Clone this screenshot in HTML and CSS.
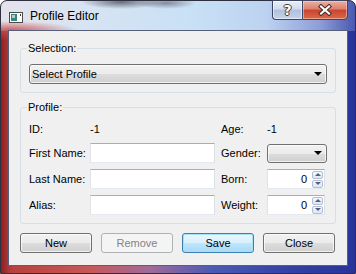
FILE: index.html
```html
<!DOCTYPE html>
<html lang="en">

<head>
    <meta charset="UTF-8" />
    <meta name="viewport" content="width=device-width, initial-scale=1.0" />
    <title>Profile Editor</title>
    <link rel="stylesheet" href="styles.css">
</head>

<body>
    <div class="window">
        <div class="titlebar">
            <svg class="app-icon" width="14" height="11" viewBox="0 0 14 11">
                <rect x="0.5" y="0.5" width="13" height="10" fill="#fff" stroke="#4a4a4a" />
                <rect x="2" y="2" width="6" height="7" fill="#3a8478" />
                <rect x="3" y="3" width="3" height="3" fill="#a6d4cc" />
                <rect x="11" y="2" width="1" height="2" fill="#333" />
            </svg>
            <span class="caption">Profile Editor</span>
            <div class="caption-buttons">
                <span class="cap-btn help">?</span>
                <span class="cap-btn close">
                    <svg width="16" height="12" viewBox="0 0 16 12">
                        <path d="M4 2.5 L12 9.5 M12 2.5 L4 9.5" stroke="#4a2a28" stroke-width="4.2" stroke-linecap="square" />
                        <path d="M4 2.5 L12 9.5 M12 2.5 L4 9.5" stroke="#fff" stroke-width="2.2" stroke-linecap="square" />
                    </svg>
                </span>
            </div>
        </div>

        <div class="client">
            <fieldset class="group selection">
                <legend>Selection:</legend>
                <div class="combo">
                    <span>Select Profile</span>
                    <i class="arrow"></i>
                </div>
            </fieldset>

            <fieldset class="group profile">
                <legend>Profile:</legend>
                <div class="form-grid">
                    <label>ID:</label>
                    <span class="value">-1</span>
                    <label class="second">Age:</label>
                    <span class="value">-1</span>

                    <label>First Name:</label>
                    <input type="text" class="text-input" />
                    <label class="second">Gender:</label>
                    <div class="combo small"><span></span><i class="arrow"></i></div>

                    <label>Last Name:</label>
                    <input type="text" class="text-input" />
                    <label class="second">Born:</label>
                    <div class="spin">
                        <span class="num">0</span>
                        <div class="spin-btns">
                            <i class="up"></i>
                            <i class="down"></i>
                        </div>
                    </div>

                    <label>Alias:</label>
                    <input type="text" class="text-input" />
                    <label class="second">Weight:</label>
                    <div class="spin">
                        <span class="num">0</span>
                        <div class="spin-btns">
                            <i class="up"></i>
                            <i class="down"></i>
                        </div>
                    </div>
                </div>
            </fieldset>

            <div class="buttons">
                <button class="btn">New</button>
                <button class="btn" disabled>Remove</button>
                <button class="btn default">Save</button>
                <button class="btn">Close</button>
            </div>
        </div>
    </div>
</body>

</html>
```

FILE: styles.css
```css
* {
    margin: 0;
    padding: 0;
    box-sizing: border-box;
}

body {
    width: 356px;
    height: 274px;
    overflow: hidden;
    font-family: "Liberation Sans", Arial, sans-serif;
    font-size: 11px;
    color: #000;
    background: #fff;
}

.window {
    width: 356px;
    height: 274px;
    border: 1px solid #2e3040;
    border-radius: 7px 7px 0 0;
    padding: 0 7px 7px;
    display: flex;
    flex-direction: column;
    background:
        radial-gradient(ellipse 40px 7px at 120px 1px, rgba(70, 70, 84, 0.75), rgba(70, 70, 84, 0) 100%) no-repeat,
        radial-gradient(ellipse 30px 6px at 165px 2px, rgba(80, 80, 96, 0.6), rgba(80, 80, 96, 0) 100%) no-repeat,
        radial-gradient(ellipse 70px 10px at 8px 30px, rgba(196, 70, 70, 0.9), rgba(196, 70, 70, 0) 100%) no-repeat,
        linear-gradient(to right, #e4e2ea 0%, #d8e4f2 22%, #c8e0f6 55%, #bcd2f0 75%, #8e9ed8 90%, #4a58b0 100%) 0 0 / 100% 30px no-repeat,
        linear-gradient(to right, #8e2020 0%, #b84040 3%, #c85858 25%, #a06a9a 42%, #4a5ab4 60%, #303ea2 85%, #28349a 100%);
}

.titlebar {
    height: 29px;
    display: flex;
    align-items: flex-start;
}

.app-icon {
    margin: 11px 0 0 1px;
}

.caption {
    margin: 7px 0 0 7px;
    font-size: 12px;
    line-height: 16px;
    color: #000;
}

.caption-buttons {
    margin: -1px 0 0 auto;
    display: flex;
}

.cap-btn {
    height: 20px;
    display: flex;
    align-items: center;
    justify-content: center;
    border: 1px solid #3c4660;
}

.help {
    width: 30px;
    border-right: 0;
    border-radius: 0 0 0 4px;
    background: linear-gradient(#e8eef8 0%, #cfdcee 45%, #b0c0de 50%, #c4d2ea 100%);
    box-shadow: inset 0 0 0 1px rgba(255, 255, 255, 0.55);
    color: #fff;
    font-family: "DejaVu Sans", sans-serif;
    font-weight: 700;
    font-size: 14px;
    line-height: 14px;
    text-shadow: 1px 0 0 #3a3a48, -1px 0 0 #3a3a48, 0 1px 0 #3a3a48, 0 -1px 0 #3a3a48;
}

.close {
    width: 46px;
    border-radius: 0 0 4px 0;
    background: linear-gradient(#eab0a4 0%, #dc806e 45%, #c8452e 50%, #d86a4a 100%);
    box-shadow: inset 0 0 0 1px rgba(255, 220, 210, 0.5);
}

.client {
    flex: 1;
    background: #f0f0f0;
    border: 1px solid #56607a;
    padding: 11px 11px 0;
}

.group {
    border: 1px solid #d5dfe5;
    border-radius: 3px;
    padding: 9px 8px 8px;
}

.group legend {
    margin-left: -2px;
    padding: 0 1px;
    line-height: 13px;
}

.profile {
    margin-top: 8px;
    padding-top: 7px;
}

.combo {
    height: 20px;
    border: 1px solid #707070;
    border-radius: 3px;
    background: linear-gradient(#f2f2f2 0%, #ebebeb 50%, #dddddd 51%, #cfcfcf 100%);
    box-shadow: inset 0 0 0 1px rgba(255, 255, 255, 0.7);
    display: flex;
    align-items: center;
    padding: 0 4px 0 2px;
}

.combo span {
    flex: 1;
}

.arrow {
    width: 0;
    height: 0;
    border-left: 4px solid transparent;
    border-right: 4px solid transparent;
    border-top: 4px solid #000;
}

.combo.small {
    width: 60px;
    height: 19px;
}

.form-grid {
    display: grid;
    grid-template-columns: 61px 131px 46px 60px;
    grid-template-rows: 16px 20px 20px 20px;
    row-gap: 6px;
    align-items: center;
}

.text-input {
    width: 125px;
    height: 20px;
    border: 1px solid;
    border-color: #abadb3 #dbdfe6 #e3e9ef #e2e3ea;
    background: #fff;
    outline: none;
}

.spin {
    width: 58px;
    height: 20px;
    border: 1px solid;
    border-color: #abadb3 #dbdfe6 #e3e9ef #e2e3ea;
    background: #fff;
    display: flex;
    align-items: center;
    padding-right: 1px;
}

.spin .num {
    flex: 1;
    text-align: right;
    padding-right: 5px;
}

.spin-btns {
    display: flex;
    flex-direction: column;
    gap: 1px;
}

.spin-btns i {
    width: 11px;
    height: 8px;
    border: 1px solid #b4c0d2;
    border-radius: 2px;
    background: linear-gradient(#f4f8fc, #dde6f2);
    display: flex;
    align-items: center;
    justify-content: center;
}

.spin-btns i::after {
    content: "";
    border-left: 3px solid transparent;
    border-right: 3px solid transparent;
}

.spin-btns .up::after {
    border-bottom: 3px solid #4d6185;
}

.spin-btns .down::after {
    border-top: 3px solid #4d6185;
}

.buttons {
    margin-top: 9px;
    display: flex;
    gap: 9px;
}

.btn {
    width: 72px;
    height: 20px;
    border: 1px solid #707070;
    border-radius: 3px;
    background: linear-gradient(#f2f2f2 0%, #ebebeb 50%, #dddddd 51%, #cfcfcf 100%);
    box-shadow: inset 0 0 0 1px rgba(255, 255, 255, 0.7);
    font-family: inherit;
    font-size: 11px;
    color: #000;
}

.btn:disabled {
    border-color: #adb2b5;
    background: #f4f4f4;
    box-shadow: none;
    color: #838383;
}

.btn.default {
    border-color: #3c7fb1;
    background: linear-gradient(#eaf6fd 0%, #d9f0fc 50%, #bee6fd 51%, #a7d9f5 100%);
    box-shadow: inset 0 0 0 1px #a8e0f8;
}
```
